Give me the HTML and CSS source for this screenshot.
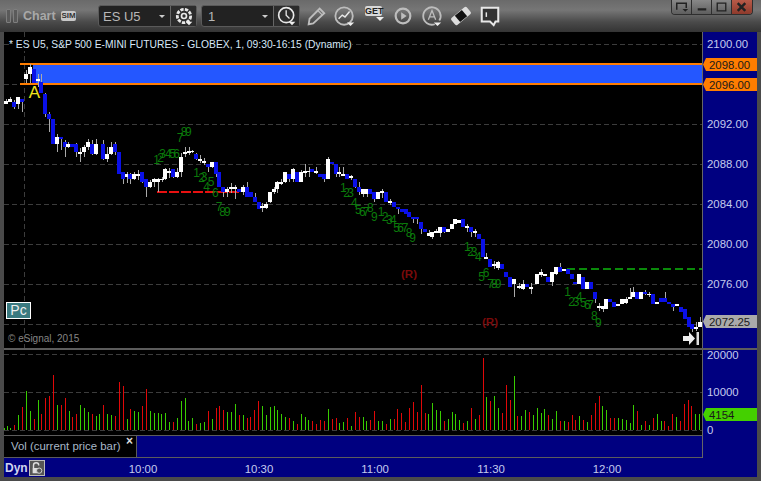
FILE: index.html
```html
<!DOCTYPE html>
<html lang="en">
<head>
<meta charset="utf-8">
<title>Chart</title>
<link rel="stylesheet" href="styles.css">
</head>
<body>
<div class="window">
  <header class="titlebar">
    <div class="grip"><span></span><span></span></div>
    <span class="title">Chart</span>
    <span class="sim">SIM</span>
    <div class="combo combo-symbol">
      <span class="combo-text">ES U5</span><i class="caret"></i>
      <span class="combo-icon">
        <svg class="icon" viewBox="0 0 24 24"><circle cx="12" cy="12" r="8" class="ln" stroke-dasharray="4 1.5" stroke-width="3.4"/><circle cx="12" cy="12" r="3" class="ln" stroke-width="2"/><path d="M14 19h8l-4 4z" class="fl"/></svg>
      </span>
    </div>
    <div class="combo combo-interval">
      <span class="combo-text">1</span><i class="caret"></i>
      <span class="combo-icon">
        <svg class="icon" viewBox="0 0 24 24"><circle cx="11" cy="11" r="9" class="ln" stroke-width="2"/><path d="M11 5v6l4 4" class="ln" stroke-width="1.6"/><path d="M14 19h8l-4 4z" class="fl"/></svg>
      </span>
    </div>
    <div class="tools">
      <svg class="tool tool-pencil" viewBox="0 0 24 24"><path d="M4 21l1-6L16 4l5 5L9 20z" class="ln-soft" stroke-width="2"/><path d="M14 6l5 5" class="ln-soft" stroke-width="1.4"/></svg>
      <svg class="tool" viewBox="0 0 24 24"><circle cx="11" cy="12" r="9.5" class="ln-soft" stroke-width="2"/><path d="M5 15l4-4 3 2 5-6" class="ln" stroke-width="1.6"/><path d="M14 19h8l-4 4z" class="fl"/></svg>
      <span class="tool tool-get"><b>GET</b><i class="caret caret-small"></i></span>
      <svg class="tool" viewBox="0 0 24 24"><circle cx="12" cy="12" r="8" class="ln-soft" stroke-width="2.4"/><path d="M10 8l6 4-6 4z" fill="#bdbdbd"/></svg>
      <svg class="tool" viewBox="0 0 24 24"><path d="M15 21A9.5 9.5 0 1 1 20 17" class="ln-soft" stroke-width="2"/><path d="M8 16l4-10 4 10M9.5 13h5" class="ln-soft" stroke-width="1.4"/><path d="M14 19h8l-4 4z" class="fl"/></svg>
      <svg class="tool" viewBox="0 0 24 24"><g transform="rotate(-40 12 12)"><rect x="1" y="7" width="22" height="10" rx="2" class="fl-soft"/><rect x="7" y="7.5" width="10" height="9" fill="#111"/></g></svg>
      <svg class="tool" viewBox="0 0 24 24"><path d="M3 3h18v15h-3l-2 4-4-4H3z" fill="#333" stroke="#e8e8e8" stroke-width="2.2"/><path d="M8 8v5" class="ln" stroke-width="1.6"/></svg>
    </div>
    <div class="winbtns">
      <button class="winbtn"><svg viewBox="0 0 20 14"><path d="M5 10V3h10v5" class="ln-dark" stroke-width="1.6"/><path d="M11 9h6l-3 3z" fill="#222"/></svg></button>
      <button class="winbtn"><svg viewBox="0 0 20 14"><path d="M6 9.5h9" class="ln-dark" stroke-width="2.4"/></svg></button>
      <button class="winbtn"><svg viewBox="0 0 20 14"><path d="M5.5 3h9v8h-9z" class="ln-dark" stroke-width="1.4"/></svg></button>
      <button class="winbtn winbtn-close"><svg viewBox="0 0 20 14"><path d="M6 3l8 8M14 3l-8 8" class="ln-dark" stroke-width="2.6"/></svg></button>
    </div>
  </header>

  <main class="panes">
    <section class="price-row">
      <div class="plot-wrap">
        <svg id="price" class="plot" viewBox="4 32 698 316" width="698" height="316"></svg>
        <div class="legend">* ES U5, S&amp;P 500 E-MINI FUTURES - GLOBEX, 1, 09:30-16:15 (Dynamic)</div>
        <div class="pc">Pc</div>
        <div class="copyright">© eSignal, 2015</div>
        <svg class="goto-end" viewBox="0 0 16 13"><path d="M0 4h6V0l6 6.5L6 13V9H0z" fill="#eee"/><path d="M13.5 0h2.5v13h-2.5z" fill="#ddd"/></svg>
      </div>
      <svg id="priceAxis" class="axis" viewBox="703 32 54 316" width="54" height="316"></svg>
    </section>
    <div class="pane-sep"></div>
    <section class="lower-row">
      <div class="lower-left">
        <svg id="volume" class="plot vol-plot" viewBox="4 350 698 85" width="698" height="85"></svg>
        <div class="vol-row">
          <div class="vol-label"><span>Vol (current price bar)</span><span class="vol-close">×</span></div>
          <div class="vol-rest"></div>
        </div>
      </div>
      <svg id="volAxis" class="axis" viewBox="703 350 54 108" width="54" height="108"></svg>
    </section>
    <footer class="timebar">
      <span class="dyn">Dyn</span>
      <span class="lock"><svg viewBox="0 0 16 16"><path d="M4 8V5a3 3 0 0 1 6 0" fill="none" stroke="#ddd" stroke-width="1.6"/><path d="M3 8h8v6H3z" fill="#ddd"/><circle cx="10.5" cy="11" r="3" fill="#555" stroke="#ddd"/></svg></span>
      <div class="times">
        <span>10:00</span><span>10:30</span><span>11:00</span><span>11:30</span><span>12:00</span>
      </div>
    </footer>
  </main>
</div>
<script src="chart.js"></script>
</body>
</html>
```

FILE: styles.css
```css
* { box-sizing: border-box; }
html, body { margin: 0; padding: 0; background: #3a3a3a; }
body { width: 761px; height: 481px; overflow: hidden; font-family: "Liberation Sans", Arial, sans-serif; }

.window { width: 761px; height: 481px; display: flex; flex-direction: column; background: #4a4a4a; }

.titlebar {
  height: 32px; flex: none; display: flex; align-items: center; position: relative;
  padding-left: 6px;
  background: linear-gradient(#6a6a6a 0, #767676 10px, #646464 15px, #4a4a4a 22px, #343434 32px);
}
.grip { display: flex; gap: 2px; margin-right: 5px; }
.grip span { width: 5px; height: 14px; border: 1px solid #7e7e7e; border-radius: 1px; background: #5a5a5a; }
.title { font-size: 12.5px; font-weight: bold; color: #a8a8a8; width: 38px; }
.sim {
  width: 15px; height: 10px; background: #c8c8c8; border-radius: 2px;
  font-size: 8px; line-height: 10px; text-align: center; color: #333; font-weight: bold;
}
.combo {
  display: flex; align-items: center; height: 22px; background: #222;
  border: 1px solid #5a5a5a; border-radius: 3px; position: relative; color: #b8b8b8; font-size: 13px;
}
.combo-symbol { width: 99px; margin-left: 22px; }
.combo-interval { width: 99px; margin-left: 4px; }
.combo-text { padding-left: 4px; flex: 1; }
.combo-interval .combo-text { padding-left: 6px; }
.caret { width: 0; height: 0; border: 3px solid transparent; border-top: 3px solid #ccc; border-bottom: 0; margin-right: 5px; }
.combo-icon { width: 26px; height: 20px; border-left: 1px solid #666; display: flex; align-items: center; justify-content: center; background: #2c2c2c; }
.icon { width: 20px; height: 20px; }
.ln { fill: none; stroke: #e8e8e8; }
.ln-soft { fill: none; stroke: #bdbdbd; }
.ln-dark { fill: none; stroke: #222; }
.fl { fill: #eee; }
.fl-soft { fill: #ddd; }

.tools { display: flex; align-items: center; margin-left: 5px; gap: 7px; }
.tool { width: 22px; height: 22px; display: block; }
.tool-get { display: flex; flex-direction: column; align-items: flex-end; width: 22px; position: relative; }
.tool-get b { width: 17px; margin: 1px 3px 0 2px; font-size: 9px; line-height: 10px; text-align: center; background: #d8d8d8; color: #222; border-radius: 2px; }
.caret-small { margin: 1px 1px 0 0; border-width: 4px; border-top-width: 4px; border-top-color: #eee; }

.winbtns { position: absolute; top: 0; right: 8px; display: flex; height: 15px; border: 1px solid #2e2e2e; border-top: 0; border-radius: 0 0 4px 4px; overflow: hidden; }
.winbtn { width: 20px; padding: 0; border: 0; border-right: 1px solid #2e2e2e; background: linear-gradient(#888, #5e5e5e); }
.winbtn svg { display: block; width: 19px; height: 14px; }
.winbtn-close { background: linear-gradient(#b85a48, #8e3a2c); border-right: 0; }

.panes { flex: 1; display: flex; flex-direction: column; margin: 0 4px 4px; background: #000; }
.price-row, .lower-row { display: flex; }
.plot-wrap { position: relative; width: 699px; height: 316px; border-right: 1px solid #666; }
.plot { display: block; background: #000; }
.axis { display: block; background: #000080; flex: none; }
.pane-sep { height: 2px; background: #5c5c5c; }

.legend { position: absolute; left: 5px; top: 6px; font-size: 10.3px; line-height: 13px; color: #d8e8f8; white-space: nowrap; background: #000; }
.pc { position: absolute; left: 2px; top: 270px; width: 25px; height: 17px; background: #3a7a80; border: 1px solid #fff; color: #eee; font-size: 14px; line-height: 15px; text-align: center; }
.copyright { position: absolute; left: 4px; top: 301px; font-size: 10px; line-height: 12px; color: #858585; }
.goto-end { position: absolute; left: 679px; top: 300px; width: 16px; height: 13px; }

.grid { stroke: #3c3c3c; stroke-width: 1; stroke-dasharray: 5 3; shape-rendering: crispEdges; }
.wick { stroke: #aaa; stroke-width: 1; shape-rendering: crispEdges; }
.body-w { fill: #fff; }
.body-b { fill: #0a10e8; }
.zone { fill: #2457ff; }
.zone-edge { fill: #ff7d00; }
.dash-red { stroke: #e81010; stroke-width: 2; stroke-dasharray: 10 2; shape-rendering: crispEdges; }
.dash-green { stroke: #0a8a0a; stroke-width: 2; stroke-dasharray: 8 4; shape-rendering: crispEdges; }
.td { fill: #0b7a0b; font: 12px "Liberation Sans", Arial, sans-serif; text-anchor: middle; }
.r-mark { fill: #7a0a0a; font: bold 11.5px "Liberation Sans", Arial, sans-serif; text-anchor: middle; }
.a-mark { fill: #f2e41e; font: 17px "Liberation Sans", Arial, sans-serif; text-anchor: middle; }
.axis-text { fill: #c4cbee; font: 11.4px "Liberation Sans", Arial, sans-serif; }
.tag-text { fill: #1a1a1a; font: 11.4px "Liberation Sans", Arial, sans-serif; }
.vol-g { stroke: #38cc00; shape-rendering: crispEdges; }
.vol-r { stroke: #e00808; shape-rendering: crispEdges; }

.lower-left { width: 699px; height: 108px; border-right: 1px solid #666; display: flex; flex-direction: column; }
.vol-plot { flex: none; }
.vol-row { display: flex; height: 23px; border-top: 1px solid #5c5c5c; border-bottom: 1px solid #5c5c5c; }
.vol-label { width: 133px; position: relative; background: #000; border-right: 1px solid #5c5c5c; color: #a8b8c8; font-size: 11.4px; line-height: 21px; padding-left: 7px; }
.vol-close { position: absolute; right: 3px; top: -5px; color: #ddd; font-weight: bold; font-size: 12px; }
.vol-rest { flex: 1; background: #000080; }

.timebar { height: 19px; background: #000080; display: flex; align-items: center; position: relative; padding-left: 1px; }
.dyn { font-size: 12px; font-weight: bold; color: #cfd4ee; width: 24px; }
.lock { width: 16px; height: 16px; background: #555; border: 1px solid #bbb; display: block; }
.lock svg { display: block; width: 14px; height: 14px; }
.times { display: flex; margin-left: 40px; }
.times span { width: 116px; text-align: center; color: #c4cbee; font-size: 11.4px; padding-top: 3px; }
```

FILE: chart.js
```js
const NS = "http://www.w3.org/2000/svg";

function el(parent, name, attrs, text) {
  const n = document.createElementNS(NS, name);
  for (const k in attrs) n.setAttribute(k, attrs[k]);
  if (text !== undefined) n.textContent = text;
  parent.appendChild(n);
  return n;
}

function rows(src) {
  return src.trim().split("\n").map(r => r.trim().split(/\s+/));
}

/* Candles: x, colour, body top, body bottom, optional wick top and bottom, in 3x crop units. */
const candleSets = [
  { ox: 0, oy: 60, data: `
    18 w 122 130 118 132
    30 w 116 124 110 126
    42 b 125 141 120 146
    54 w 111 132 110 148
    67 b 117 125 117 155
    79 w 41 57 30 70
    91 w 21 41 12 70
    103 b 27 68
    115 w 57 63 42 80
    124 b 67 100 42 100
    136 b 102 161 100 170
    148 b 162 177 155 215
    160 b 177 251 177 251
    172 w 231 251 222 275
    184 b 231 237 231 270
    196 b 246 261 240 290
    205 w 252 261 245 265
    217 b 252 261
    229 b 252 276 250 290
    241 w 276 282 265 305
    253 w 261 276 255 290
    265 w 246 261 238 270
    276 b 252 282 240 285
    289 w 252 282 237 285
    310 b 252 297 240 300
    322 w 282 297 260 305
    334 w 261 282 245 285
    346 b 252 276 245 285
    358 b 276 342
    370 b 336 357 336 372
    382 w 342 351 335 370
    390 b 342 357 340 372
    403 w 342 357 335 360
    415 w 342 348 330 360
    427 b 336 366 336 370
    439 b 358 381 358 410
    451 w 366 381 360 385
    463 w 357 366 355 380
    475 w 357 366 355 395
    487 w 357 360 350 366
    496 w 327 357 325 360
    508 w 333 339 325 355
    520 b 327 351 327 353
    532 w 336 351 325 355
    544 w 291 336 280 350
    556 w 276 282 262 290
    568 w 273 279 262 285
    577 w 273 276 270 280
    589 b 282 297 280 300
    601 w 297 303 285 310
    613 w 303 309 295 315
    625 b 312 321 312 335
    637 w 306 321 306 325
    649 b 306 342 306 350
    658 b 336 381
    670 b 381 396 381 410
    682 w 387 396 380 410
    694 w 381 387 370 400
    706 w 381 387 375 417
    718 b 387 396
    730 w 381 396 375 405
    742 b 381 411 365 411` },
  { ox: 250, oy: 140, data: `
    3 b 156 171
    14 b 171 186 160 186
    26 b 186 207
    37 w 198 204 190 215
    49 w 192 204 185 207
    61 w 156 186 155 190
    73 w 147 156 140 162
    82 w 126 147 122 160
    94 w 126 132 118 135
    106 w 96 126 95 130
    117 b 102 117 102 125
    129 w 87 117 85 125
    141 b 96 126
    153 w 96 126 90 126
    165 w 93 99 72 110
    177 w 93 96 82 110
    187 b 87 96
    199 w 93 99 82 102
    209 b 102 111
    221 b 102 117 102 125
    235 w 57 117 52 117
    247 b 66 72
    259 b 72 102 72 110
    268 w 96 102 82 110
    280 w 102 108 82 108
    292 b 102 117
    304 w 108 114 104 120
    316 b 117 141 117 145
    328 b 141 156 125 165
    340 w 147 162 147 170
    352 w 147 162 147 170
    361 b 147 162
    373 b 156 177 156 185
    385 w 156 177
    397 w 153 159 147 175
    409 b 156 186
    421 w 183 189 178 195
    433 b 186 201
    445 b 201 207 201 222
    457 b 207 216
    469 b 207 222
    478 b 216 231
    490 b 231 237 231 250
    502 b 231 237 231 252
    514 b 246 267 246 282
    526 b 267 276
    538 w 279 288 270 288
    547 w 276 291 276 297
    559 w 273 279 268 279
    571 w 261 279 261 290
    583 b 261 276 261 280
    595 w 267 276
    607 w 252 267
    616 w 237 252
    628 w 240 249
    640 b 237 261
    652 w 258 264 252 275
    664 b 261 276 261 290
    676 w 273 279 267 290
    688 b 282 297
    700 b 297 351` },
  { ox: 470, oy: 220, data: `
    49 w 112 118 100 118
    61 b 118 141
    73 w 132 138 124 146
    85 w 126 144 124 150
    97 b 132 147
    109 b 156 171
    121 b 171 201
    133 w 177 192 177 230
    148 w 198 204 190 207
    160 w 192 207 180 210
    172 b 192 201
    184 w 201 207 190 222
    202 w 162 192
    214 w 156 165 147 170
    226 w 162 168
    235 b 171 186
    247 w 156 186 156 198
    259 w 141 162 141 165
    271 b 141 156 130 156
    283 w 147 153
    295 b 147 162
    307 b 162 177
    316 b 186 192
    328 w 162 192
    340 b 171 207
    352 w 186 207
    364 b 186 207
    376 b 216 237 216 250
    388 w 258 264 250 272
    400 w 258 267 258 275
    409 w 237 267
    421 b 237 246
    433 b 246 261
    445 w 252 258
    457 w 237 252
    469 w 237 249 232 252
    481 w 231 237 205 237
    490 w 216 231 200 231
    502 b 216 237
    514 w 216 237
    526 b 216 222 210 226
    538 w 222 225 215 232
    550 b 222 252
    562 w 246 252
    574 b 234 246
    586 b 234 246 216 246
    598 b 246 252
    610 b 252 261 252 272
    622 w 252 258
    634 b 261 276
    646 b 267 297
    658 b 291 321
    667 b 312 327 312 335
    679 w 321 327 305 332
    691 w 306 321 292 321` }
];

/* TD sequence digits: x, y centre and digit, in 3x crop units. */
const digitSets = [
  { ox: 0, oy: 60, data: "470,300,1 482,295,2 488,283,3 505,283,4 518,283,5 530,283,6 540,235,7 552,215,8 565,215,9 590,340,1 605,355,2 612,352,3 620,380,4 633,365,5 646,400,6 657,440,7 668,455,8 682,455,9" },
  { ox: 250, oy: 140, data: "280,145,1 290,160,2 302,160,3 313,190,4 325,210,5 337,215,6 348,215,7 361,205,8 373,230,9 393,215,1 405,232,2 418,240,3 430,240,4 440,265,5 452,265,6 465,265,7 477,280,8 488,295,9 652,320,1 662,335,2 672,335,3 685,350,4 695,410,5 708,400,6 722,432,7 733,432,8 744,432,9" },
  { ox: 470, oy: 220, data: "293,215,1 305,245,2 318,245,3 328,232,4 340,250,5 352,255,6 362,255,7 373,287,8 385,310,9" }
];

const volumeSets = [
  { ox: 0, base: 420, data: "14,415,g 22,408,g 31,414,g 43,405,r 55,375,g 67,351,r 79,303,g 91,363,g 103,387,r 115,330,g 125,372,r 137,324,r 148,318,r 160,255,r 172,345,g 184,345,r 196,324,r 208,363,g 217,381,r 229,372,r 241,345,g 253,354,g 265,366,g 277,372,r 289,378,g 298,372,g 310,345,r 322,372,g 334,375,g 346,378,r 358,276,r 370,288,r 382,387,g 391,357,r 403,363,g 415,366,g 427,348,r 439,297,r 451,363,g 463,369,g 475,369,g 483,372,g 496,369,g 508,396,g 520,396,r 532,384,g 544,333,g 556,324,g 565,393,g 577,384,g 589,402,r 601,399,g 613,396,g 625,363,r 637,387,g 649,354,r 658,348,r 670,360,r 682,366,g 694,366,g 706,342,g 718,375,r 730,375,g 742,384,r" },
  { ox: 250, base: 255, data: "1,216,r 13,195,r 25,168,r 37,183,g 49,210,g 61,186,g 73,183,g 82,195,g 94,207,g 106,216,g 118,219,r 130,228,g 142,237,r 154,207,g 166,216,g 175,225,g 187,228,r 199,237,r 211,225,r 223,228,r 235,192,g 247,222,r 259,219,r 268,234,g 280,231,g 292,219,r 304,243,g 316,201,r 328,216,r 340,216,g 349,228,g 361,225,r 373,198,r 385,228,g 397,228,g 409,237,r 421,222,g 433,222,r 442,192,r 454,204,r 466,231,r 478,189,r 490,171,r 502,201,r 514,120,r 526,204,r 535,207,g 547,174,g 559,195,g 571,198,g 583,228,r 595,222,g 607,201,g 616,207,g 628,225,g 640,234,r 652,228,g 664,189,r 676,222,g 688,210,r 700,39,r 709,156,g 721,168,r 733,153,g 745,189,g 757,204,r 769,120,r 781,165,r 793,93,g 802,213,r 814,213,g 826,195,g 838,201,r 850,210,g 862,189,g 874,204,g 883,192,g 895,210,r 907,222,g 919,198,g 931,228,r 943,228,g 955,231,r 967,210,r 976,225,r 988,213,g 1000,225,r 1012,231,g 1024,210,r 1036,174,r 1048,153,r 1057,183,g 1069,195,g" },
  { ox: 600, base: 420, data: "31,384,r 43,384,r 55,384,g 67,387,g 79,390,g 91,399,g 100,345,g 112,363,r 124,405,g 136,393,r 148,405,g 160,384,r 172,372,g 184,393,g 193,393,r 205,408,r 217,372,r 229,381,g 241,393,r 253,342,r 265,330,r 274,348,r 286,372,g 298,372,g" }
];

function hGrid(svg, ys) {
  ys.forEach(y => el(svg, "line", { class: "grid", x1: 4, x2: 702, y1: y + 0.5, y2: y + 0.5 }));
}

function drawPrice() {
  const svg = document.getElementById("price");
  hGrid(svg, [44, 84, 124, 164, 204, 244, 284, 324]);
  el(svg, "line", { class: "grid", x1: 24.5, x2: 24.5, y1: 32, y2: 348 });

  el(svg, "rect", { class: "zone", x: 33, y: 64, width: 669, height: 20 });
  el(svg, "rect", { class: "zone-edge", x: 20, y: 63, width: 682, height: 2 });
  el(svg, "rect", { class: "zone-edge", x: 20, y: 83, width: 682, height: 2 });

  el(svg, "line", { class: "dash-red", x1: 157, x2: 240, y1: 192, y2: 192 });
  el(svg, "line", { class: "dash-green", x1: 567, x2: 702, y1: 269, y2: 269 });

  candleSets.forEach(set => {
    rows(set.data).forEach(r => {
      const x = Math.round(set.ox + +r[0] / 3);
      const top = set.oy + +r[2] / 3;
      const bottom = set.oy + +r[3] / 3;
      if (r.length > 4) {
        el(svg, "line", {
          class: "wick", x1: x + 0.5, x2: x + 0.5,
          y1: set.oy + +r[4] / 3, y2: set.oy + +r[5] / 3
        });
      }
      el(svg, "rect", {
        class: r[1] === "w" ? "body-w" : "body-b",
        x: x - 2, y: Math.round(top), width: 4, height: Math.max(1, Math.round(bottom - top))
      });
    });
  });

  digitSets.forEach(set => {
    set.data.split(" ").forEach(d => {
      const [x, y, digit] = d.split(",");
      el(svg, "text", { class: "td", x: set.ox + +x / 3, y: set.oy + +y / 3 + 4 }, digit);
    });
  });

  el(svg, "text", { class: "r-mark", x: 409, y: 278 }, "(R)");
  el(svg, "text", { class: "r-mark", x: 490, y: 326 }, "(R)");
  el(svg, "text", { class: "a-mark", x: 34.5, y: 98 }, "A");
}

function tag(svg, y, fill, label) {
  el(svg, "path", { d: `M703 ${y + 6.5}l3-6.5h51v13h-51z`, fill });
  el(svg, "text", { class: "tag-text", x: 709, y: y + 11 }, label);
}

function drawPriceAxis() {
  const svg = document.getElementById("priceAxis");
  [[44, "2100.00"], [124, "2092.00"], [164, "2088.00"], [204, "2084.00"], [244, "2080.00"], [284, "2076.00"]]
    .forEach(([y, t]) => el(svg, "text", { class: "axis-text", x: 707, y: y + 4 }, t));
  tag(svg, 58, "#ff7d00", "2098.00");
  tag(svg, 78, "#ff7d00", "2096.00");
  tag(svg, 315, "#aaaaaa", "2072.25");
}

function drawVolume() {
  const svg = document.getElementById("volume");
  hGrid(svg, [354, 392, 430]);
  volumeSets.forEach(set => {
    set.data.split(" ").forEach(b => {
      const [zx, top, c] = b.split(",");
      const x = Math.floor(set.ox + +zx / 3) + 0.5;
      el(svg, "line", {
        class: c === "g" ? "vol-g" : "vol-r", x1: x, x2: x,
        y1: 430 - (set.base - +top) / 3, y2: 430
      });
    });
  });
}

function drawVolAxis() {
  const svg = document.getElementById("volAxis");
  [[355, "20000"], [392, "10000"], [430, "0"]]
    .forEach(([y, t]) => el(svg, "text", { class: "axis-text", x: 707, y: y + 4 }, t));
  tag(svg, 408, "#44d000", "4154");
}

drawPrice();
drawPriceAxis();
drawVolume();
drawVolAxis();
```
